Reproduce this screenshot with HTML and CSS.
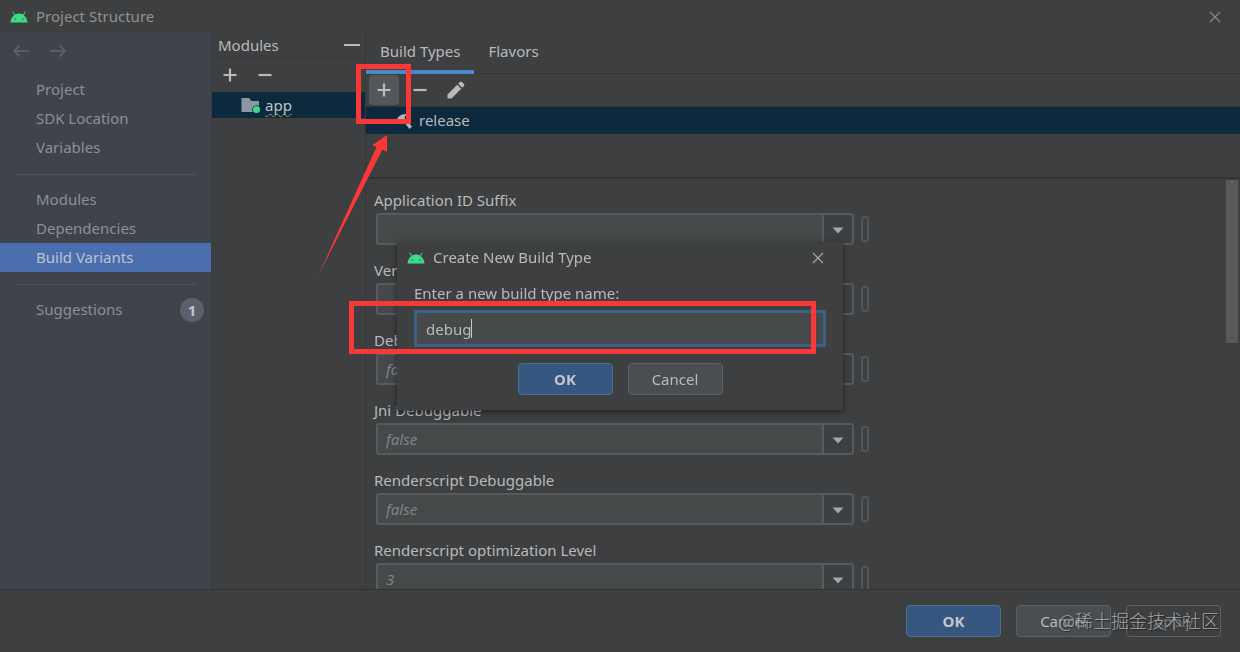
FILE: index.html
```html
<!DOCTYPE html>
<html lang="en">
<head>
<meta charset="utf-8">
<title>Project Structure</title>
<link rel="stylesheet" href="styles.css">
</head>
<body>

<!-- shared icons -->
<svg class="sprite" width="0" height="0" aria-hidden="true">
  <symbol id="android" viewBox="0 0 18 12">
    <path d="M0.500 11.500C0.800 7.200 4 2.500 9 2.500s8.200 4.700 8.500 9z" fill="#3ddc84"/>
    <path d="M4.800 4.500L3 1M13.200 4.500L15 1" stroke="#3ddc84" stroke-width="1" stroke-linecap="round"/>
    <circle cx="5.200" cy="8" r="0.700" fill="#3c3f41"/>
    <circle cx="12.800" cy="8" r="0.700" fill="#3c3f41"/>
  </symbol>
  <symbol id="close" viewBox="0 0 12 12">
    <path d="M1 1l10 10M11 1L1 11" stroke="currentColor" stroke-width="1.200" fill="none"/>
  </symbol>
  <symbol id="plus" viewBox="0 0 14 14">
    <path d="M7 0.500v13M0.500 7h13" stroke="currentColor" stroke-width="2.200" fill="none"/>
  </symbol>
  <symbol id="minus" viewBox="0 0 14 14">
    <path d="M0.500 7h13" stroke="currentColor" stroke-width="2.200" fill="none"/>
  </symbol>
  <symbol id="caret" viewBox="0 0 12 7">
    <path d="M0.500 0.500h11L6 6.500z" fill="#a4a7a9"/>
  </symbol>
</svg>

<header class="title-bar">
  <svg class="android" aria-hidden="true"><use href="#android"/></svg>
  <h1 class="window-title">Project Structure</h1>
  <button type="button" class="close-btn" aria-label="Close"><svg width="12" height="12"><use href="#close"/></svg></button>
</header>

<div class="workspace">
  <nav class="sidebar">
    <div class="history">
      <button type="button" class="plain-btn" aria-label="Back">
        <svg width="18" height="14" viewBox="0 0 18 14"><path d="M17 7H2M7.500 1.500L2 7l5.500 5.500" stroke="currentColor" stroke-width="2" fill="none"/></svg>
      </button>
      <button type="button" class="plain-btn" aria-label="Forward">
        <svg width="18" height="14" viewBox="0 0 18 14"><path d="M1 7h15M10.500 1.500L16 7l-5.500 5.500" stroke="currentColor" stroke-width="2" fill="none"/></svg>
      </button>
    </div>
    <div class="nav-group">
      <a href="#" class="nav-item">Project</a>
      <a href="#" class="nav-item">SDK Location</a>
      <a href="#" class="nav-item">Variables</a>
    </div>
    <div class="nav-group">
      <a href="#" class="nav-item">Modules</a>
      <a href="#" class="nav-item">Dependencies</a>
      <a href="#" class="nav-item selected">Build Variants</a>
    </div>
    <div class="nav-group">
      <a href="#" class="nav-item">Suggestions <span class="count">1</span></a>
    </div>
  </nav>

  <section class="modules">
    <div class="modules-header">
      <h2 class="modules-title">Modules</h2>
      <button type="button" class="plain-btn" aria-label="Hide modules"><svg width="16" height="14" viewBox="0 0 16 14"><path d="M0 7h16" stroke="currentColor" stroke-width="2"/></svg></button>
    </div>
    <div class="modules-tools">
      <button type="button" class="plain-btn" aria-label="Add module"><svg width="14" height="14"><use href="#plus"/></svg></button>
      <button type="button" class="plain-btn" aria-label="Remove module"><svg width="14" height="14"><use href="#minus"/></svg></button>
    </div>
    <a href="#" class="module-row">
      <svg width="20" height="17" viewBox="0 0 20 17" aria-hidden="true">
        <path d="M0.500 1h7.500l2.500 3H18v11H0.500z" fill="#8b98a3"/>
        <circle cx="15.500" cy="12.500" r="4.300" fill="#0d293e"/>
        <circle cx="15.500" cy="12.500" r="3.500" fill="#3ddc84"/>
      </svg>
      <span class="module-name">app</span>
    </a>
  </section>

  <main class="content">
    <div class="tabs" role="tablist">
      <button type="button" class="tab active" role="tab" aria-selected="true">Build Types</button>
      <button type="button" class="tab" role="tab" aria-selected="false">Flavors</button>
    </div>
    <div class="type-tools">
      <button type="button" class="tool-btn pressed" aria-label="Add build type"><svg width="14" height="14"><use href="#plus"/></svg></button>
      <button type="button" class="tool-btn" aria-label="Remove build type"><svg width="14" height="14"><use href="#minus"/></svg></button>
      <button type="button" class="tool-btn" aria-label="Edit build type">
        <svg width="18" height="18" viewBox="0 0 18 18"><path d="M0.500 17.500v-4L10.200 3.800l4 4L4.500 17.500z" fill="currentColor"/><path d="M11.200 2.800L13 1q1-0.900 2 0l2 2q0.900 1 0 2l-1.800 1.800z" fill="currentColor"/></svg>
      </button>
    </div>
    <div class="type-list">
      <a href="#" class="type-row">
        <svg width="18" height="18" viewBox="0 0 18 18" aria-hidden="true"><path d="M1 8.500C3 4.500 6.500 1.500 12 2L9.500 5l1 2.500 6.500 7-2.500 2.500-6-7.500-2-0.500L4 11z" fill="#b0b6ba"/></svg>
        release
      </a>
    </div>
    <div class="form-area">
      <form class="build-form">
        <div class="field">
          <label for="suffix">Application ID Suffix</label>
          <div class="field-line">
            <div class="combo">
              <input type="text" id="suffix">
              <button type="button" class="combo-arrow" aria-label="Show suffixes"><svg width="12" height="7"><use href="#caret"/></svg></button>
            </div>
            <button type="button" class="extract" aria-label="Bind suffix"></button>
          </div>
        </div>
        <div class="field">
          <label for="version">Ver</label>
          <div class="field-line">
            <div class="combo">
              <input type="text" id="version">
              <button type="button" class="combo-arrow" aria-label="Show versions"><svg width="12" height="7"><use href="#caret"/></svg></button>
            </div>
            <button type="button" class="extract" aria-label="Bind version"></button>
          </div>
        </div>
        <div class="field">
          <label for="debuggable">Debuggable</label>
          <div class="field-line">
            <div class="combo">
              <select id="debuggable"><option>false</option><option>true</option></select>
              <span class="combo-arrow"><svg width="12" height="7"><use href="#caret"/></svg></span>
            </div>
            <button type="button" class="extract" aria-label="Bind debuggable"></button>
          </div>
        </div>
        <div class="field">
          <label for="jni">Jni Debuggable</label>
          <div class="field-line">
            <div class="combo">
              <select id="jni"><option>false</option><option>true</option></select>
              <span class="combo-arrow"><svg width="12" height="7"><use href="#caret"/></svg></span>
            </div>
            <button type="button" class="extract" aria-label="Bind jni debuggable"></button>
          </div>
        </div>
        <div class="field">
          <label for="renderscript">Renderscript Debuggable</label>
          <div class="field-line">
            <div class="combo">
              <select id="renderscript"><option>false</option><option>true</option></select>
              <span class="combo-arrow"><svg width="12" height="7"><use href="#caret"/></svg></span>
            </div>
            <button type="button" class="extract" aria-label="Bind renderscript debuggable"></button>
          </div>
        </div>
        <div class="field">
          <label for="optimization">Renderscript optimization Level</label>
          <div class="field-line">
            <div class="combo">
              <select id="optimization"><option>3</option><option>2</option><option>1</option></select>
              <span class="combo-arrow"><svg width="12" height="7"><use href="#caret"/></svg></span>
            </div>
            <button type="button" class="extract" aria-label="Bind optimization level"></button>
          </div>
        </div>
      </form>
      <div class="scroll-track"><div class="scroll-thumb"></div></div>
    </div>
  </main>
</div>

<footer class="footer">
  <button type="button" class="btn primary">OK</button>
  <button type="button" class="btn">Cancel</button>
  <button type="button" class="btn" disabled>Apply</button>
  <span class="watermark">@稀土掘金技术社区</span>
</footer>

<div class="overlay">
  <form class="dialog" role="dialog" aria-labelledby="dialog-title">
    <div class="dialog-header">
      <svg class="android" aria-hidden="true"><use href="#android"/></svg>
      <h2 class="dialog-title" id="dialog-title">Create New Build Type</h2>
      <button type="button" class="close-btn" aria-label="Close dialog"><svg width="12" height="12"><use href="#close"/></svg></button>
    </div>
    <div class="dialog-body">
      <label for="type-name">Enter a new build type name:</label>
      <input type="text" id="type-name" class="name-input" value="debug">
    </div>
    <div class="dialog-buttons">
      <button type="button" class="btn primary">OK</button>
      <button type="button" class="btn">Cancel</button>
    </div>
  </form>
</div>

<!-- red callouts drawn over the window -->
<svg class="callouts" width="1240" height="652" viewBox="0 0 1240 652" aria-hidden="true">
  <rect x="358.500" y="66.500" width="50" height="55" fill="none" stroke="#fb3838" stroke-width="5"/>
  <rect x="351.500" y="303.500" width="462" height="48" fill="none" stroke="#fb3838" stroke-width="5"/>
  <path d="M318 276L376.500 147l-4-2L387 135v17l-4.500-2.500z" fill="#fb3838"/>
</svg>

</body>
</html>
```
FILE: styles.css
```css
* {
  box-sizing: border-box;
}

body {
  margin: 0;
  height: 100vh;
  display: flex;
  flex-direction: column;
  overflow: hidden;
  background: #3d3f41;
  color: #b8babc;
  font-family: "Noto Sans", "Noto Sans CJK SC", sans-serif;
  font-size: 15px;
  line-height: 21px;
}

h1, h2 {
  margin: 0;
  font-size: 15px;
  font-weight: normal;
}

a {
  color: inherit;
  text-decoration: none;
}

button, input, select {
  font: inherit;
  color: inherit;
}

button {
  padding: 0;
  border: none;
  background: none;
}

svg {
  display: block;
}

.sprite {
  position: absolute;
}

.android {
  width: 18px;
  height: 12px;
}

/* Title bar */
.title-bar {
  display: flex;
  align-items: center;
  gap: 8px;
  height: 33px;
  padding: 0 19px 0 10px;
  color: #8f9193;
}

.close-btn {
  margin-left: auto;
  color: #a4a6a8;
}

.title-bar .close-btn {
  color: #85878a;
}

.workspace {
  flex: 1;
  display: flex;
  min-height: 0;
  border-bottom: 1px solid #2f3133;
}

/* Sidebar */
.sidebar {
  width: 212px;
  flex: none;
  background: #3e434c;
  color: #8d9093;
  border-right: 1px solid #3a3c3f;
}

.history {
  display: flex;
  align-items: flex-start;
  gap: 19px;
  height: 42px;
  padding: 11px 12px;
  color: #5b5e64;
}

.nav-group + .nav-group {
  margin-top: 12px;
}

.nav-group + .nav-group::before {
  content: "";
  display: block;
  height: 1px;
  margin: 0 16px 10px;
  background: #50555b;
}

.nav-item {
  display: flex;
  align-items: center;
  justify-content: space-between;
  height: 29px;
  padding: 0 7px 0 36px;
}

.nav-item.selected {
  background: #4b6eaf;
  color: #bcc3cd;
}

.count {
  width: 24px;
  height: 24px;
  border-radius: 50%;
  background: #5b616b;
  color: #c3c6ca;
  font-weight: bold;
  line-height: 24px;
  text-align: center;
}

/* Modules panel */
.modules {
  width: 154px;
  flex: none;
  border-right: 1px solid #34363a;
}

.modules-header {
  display: flex;
  justify-content: space-between;
  align-items: center;
  height: 25px;
  padding: 0 5px 0 6px;
  border-bottom: 1px solid #37393b;
}

.modules-tools {
  display: flex;
  align-items: center;
  gap: 21px;
  height: 34px;
  padding: 0 11px;
}

.module-row {
  display: flex;
  align-items: center;
  gap: 4px;
  height: 26px;
  padding-left: 29px;
  background: #0d293e;
  color: #bfc3c6;
}

.module-name {
  text-decoration: underline wavy #a9914a 1px;
  text-underline-offset: 2px;
  text-decoration-skip-ink: none;
}

/* Build types */
.content {
  flex: 1;
  min-width: 0;
  display: flex;
  flex-direction: column;
}

.tabs {
  display: flex;
  height: 41px;
  border-bottom: 1px solid #323436;
}

.tab {
  padding: 0 14px;
  border-bottom: 4px solid transparent;
  height: 41px;
}

.tab.active {
  border-bottom-color: #4a88c7;
}

.type-tools {
  display: flex;
  align-items: center;
  gap: 6px;
  height: 33px;
  padding-left: 3px;
  border-bottom: 1px solid #323436;
}

.tool-btn {
  width: 30px;
  height: 30px;
  display: flex;
  align-items: center;
  justify-content: center;
  border-radius: 4px;
}

.tool-btn.pressed {
  background: #55585a;
}

.type-list {
  height: 72px;
  border-bottom: 2px solid #313335;
}

.type-row {
  display: flex;
  align-items: center;
  gap: 6px;
  height: 27px;
  padding-left: 29px;
  background: #0d293e;
}

.form-area {
  flex: 1;
  min-height: 0;
  display: flex;
  justify-content: space-between;
  overflow: hidden;
}

.build-form {
  width: 503px;
  padding: 11px 0 0 8px;
}

.field {
  margin-bottom: 15px;
}

.field label {
  display: block;
  height: 23px;
}

.field-line {
  display: flex;
  align-items: center;
  gap: 7px;
  padding-left: 2px;
}

.combo {
  flex: 1;
  display: grid;
  grid-template-columns: 1fr 30px;
  height: 32px;
  border: 2px solid #585b5d;
  border-radius: 3px;
  background: #45494a;
}

.combo input, .combo select {
  grid-row: 1;
  grid-column: 1;
  min-width: 0;
  height: 28px;
  padding: 0 8px;
  border: none;
  background: none;
  color: #808486;
  font-style: italic;
  appearance: none;
  outline: none;
}

.combo select {
  grid-column: 1 / 3;
}

.combo-arrow {
  grid-row: 1;
  grid-column: 2;
  display: flex;
  align-items: center;
  justify-content: center;
  border-left: 2px solid #585b5d;
  background: #3d3f41;
  padding-top: 2px;
  pointer-events: none;
}

.extract {
  width: 8px;
  height: 26px;
  border: 2px solid #535658;
  border-radius: 3px;
}

.scroll-track {
  width: 14px;
  padding: 1px 2px 0 0;
}

.scroll-thumb {
  height: 163px;
  background: #58595b;
}

/* Footer */
.footer {
  position: relative;
  display: flex;
  justify-content: flex-end;
  gap: 15px;
  padding: 15px 19px;
}

.btn {
  width: 95px;
  height: 32px;
  border: 1px solid #5e6162;
  border-radius: 4px;
  background: #4a4e50;
}

.btn.primary {
  border-color: #4c708c;
  background: #365880;
  color: #c3c7cc;
  font-weight: bold;
}

.btn:disabled {
  background: #3d3f41;
  color: #777a7c;
}

.watermark {
  position: absolute;
  right: 21px;
  top: 18px;
  font-family: "Noto Sans CJK SC", sans-serif;
  font-size: 18px;
  line-height: 24px;
  font-weight: 300;
  color: #a5a7a9;
  text-shadow: 1px 1px 1px #222;
}

/* New build type dialog */
.overlay {
  position: fixed;
  inset: 0;
  display: flex;
  align-items: center;
  justify-content: center;
}

.dialog {
  width: 446px;
  padding-bottom: 15px;
  background: #3d3f41;
  box-shadow: 0 2px 6px rgba(0, 0, 0, 0.5);
}

.dialog-header {
  display: flex;
  align-items: center;
  gap: 8px;
  height: 31px;
  padding: 0 19px 0 10px;
}

.dialog-body {
  padding: 10px 17px 0;
}

.dialog-body label {
  display: block;
  height: 27px;
}

/* the thin gradient is the text cursor */
.name-input {
  display: block;
  width: 100%;
  height: 37px;
  padding: 0 9px;
  border: 3px solid #3d6185;
  background: linear-gradient(#c8cacc, #c8cacc) 54px 50% / 1px 19px no-repeat #45494a;
  outline: none;
}

.dialog-buttons {
  display: flex;
  justify-content: center;
  gap: 15px;
  padding-top: 16px;
}

.callouts {
  position: absolute;
  top: 0;
  left: 0;
  pointer-events: none;
}
```
